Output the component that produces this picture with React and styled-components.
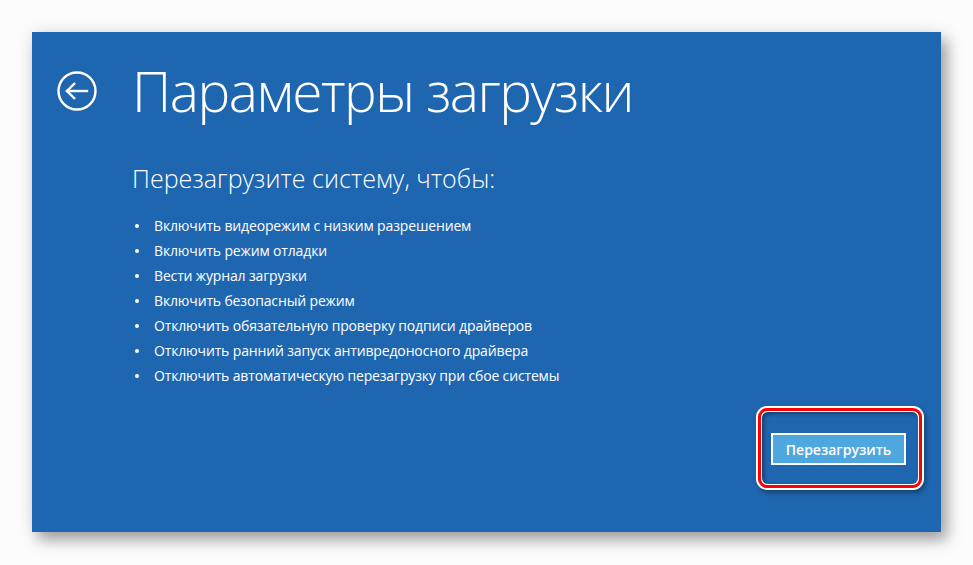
import React from "react";
import styled, { createGlobalStyle } from "styled-components";

const Global = createGlobalStyle`
  html, body { margin: 0; padding: 0; background: #fcfcfc; }
  body { font-family: "Open Sans", "Noto Sans", sans-serif; }
`;

const Page = styled.div`
  width: 973px;
  height: 565px;
  padding: 32px 0 0 32px;
  box-sizing: border-box;
`;

const Panel = styled.div`
  width: 909px;
  height: 500px;
  background: #1f66b0;
  color: #fff;
  box-shadow: 6px 8px 14px rgba(0, 0, 0, 0.35), 0 0 18px rgba(0, 0, 0, 0.08);
  display: flex;
  flex-direction: column;
  box-sizing: border-box;
  padding: 28px 0 0 24px;
`;

const Header = styled.div`
  display: flex;
  align-items: center;
  gap: 34px;
`;

const BackButton = styled.div`
  width: 42px;
  height: 42px;
  display: flex;
  align-items: center;
  justify-content: center;
`;

const Title = styled.h1`
  margin: 0;
  font-weight: 300;
  font-size: 55px;
  line-height: 62px;
  letter-spacing: -1.45px;
`;

const Body = styled.div`
  padding-left: 76px;
  margin-top: 40px;
  display: flex;
  flex-direction: column;
`;

const Subtitle = styled.h2`
  margin: 0;
  font-weight: 300;
  font-size: 25px;
  line-height: 32px;
  letter-spacing: 0.05px;
`;

const List = styled.ul`
  list-style: none;
  margin: 19px 0 0;
  padding: 0;
  display: flex;
  flex-direction: column;
`;

const Item = styled.li`
  display: flex;
  align-items: center;
  font-size: 14px;
  letter-spacing: -0.15px;
  line-height: 25px;
  &::before {
    content: "";
    width: 4px;
    height: 4px;
    border-radius: 50%;
    background: #fff;
    margin: 0 15px 0 3px;
  }
`;

const Footer = styled.div`
  display: flex;
  justify-content: flex-end;
  padding-right: 17px;
  margin-top: 18px;
`;

const Highlight = styled.div`
  padding: 2px;
  border-radius: 11px;
  background: #fff;
  box-shadow: 2px 3px 5px rgba(0, 0, 0, 0.35);
`;

const HighlightRing = styled.div`
  border: 3px solid #ff0000;
  border-radius: 9px;
  padding: 1px;
  background: #fff;
`;

const HighlightInner = styled.div`
  border-radius: 6px;
  background: #1f66b0;
  box-shadow: inset 2px 2px 4px rgba(0, 0, 0, 0.4);
  padding: 21px 12px 19px 9px;
  display: flex;
`;

const RestartButton = styled.button`
  width: 135px;
  height: 32px;
  border: 2px solid #fff;
  background: #4ea7de;
  color: #fff;
  font-family: "Open Sans", "Noto Sans", sans-serif;
  font-weight: 600;
  font-size: 14px;
  padding: 0;
  cursor: pointer;
`;

const items = [
  "Включить видеорежим с низким разрешением",
  "Включить режим отладки",
  "Вести журнал загрузки",
  "Включить безопасный режим",
  "Отключить обязательную проверку подписи драйверов",
  "Отключить ранний запуск антивредоносного драйвера",
  "Отключить автоматическую перезагрузку при сбое системы",
];

export default function App() {
  return (
    <>
      <Global />
      <Page>
        <Panel>
          <Header>
            <BackButton>
              <svg width="42" height="42" viewBox="0 0 42 42" fill="none" stroke="#fff" strokeWidth="2.4">
                <circle cx="21" cy="21" r="18.5" />
                <path d="M11 21 H31" strokeLinecap="square" />
                <path d="M19 13 L11 21 L19 29" strokeLinejoin="miter" />
              </svg>
            </BackButton>
            <Title>Параметры загрузки</Title>
          </Header>
          <Body>
            <Subtitle>Перезагрузите систему, чтобы:</Subtitle>
            <List>
              {items.map((t) => (
                <Item key={t}>{t}</Item>
              ))}
            </List>
          </Body>
          <Footer>
            <Highlight>
              <HighlightRing>
                <HighlightInner>
                  <RestartButton>Перезагрузить</RestartButton>
                </HighlightInner>
              </HighlightRing>
            </Highlight>
          </Footer>
        </Panel>
      </Page>
    </>
  );
}
